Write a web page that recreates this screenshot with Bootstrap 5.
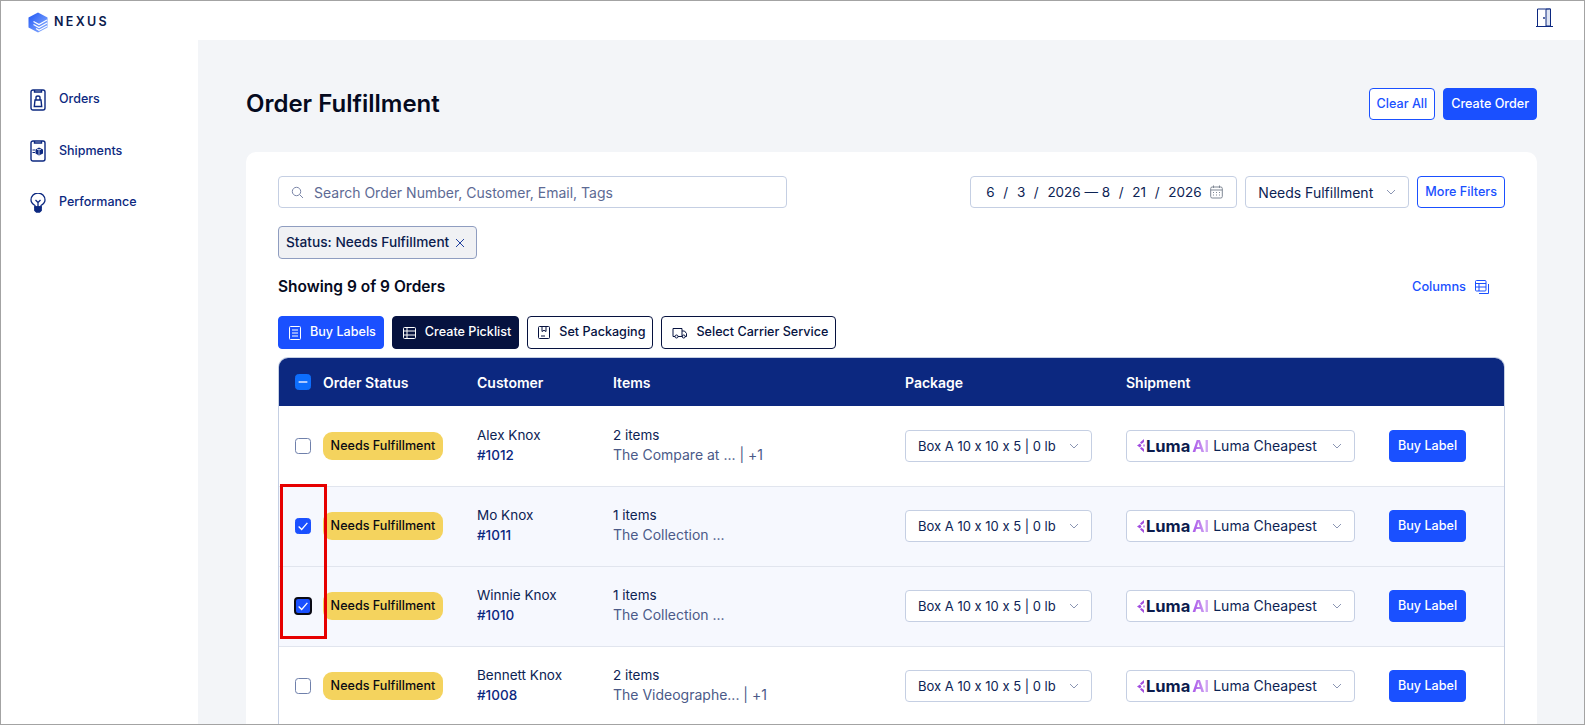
<!DOCTYPE html>
<html lang="en">
<head>
<meta charset="UTF-8">
<meta name="viewport" content="width=device-width, initial-scale=1.0">
<title>Order Fulfillment - Nexus</title>
<link rel="stylesheet" href="https://cdn.jsdelivr.net/npm/bootstrap@5.3.0/dist/css/bootstrap.min.css">
<style>
html, body { height: 725px; overflow: hidden; }
body { font-family: Inter, "Liberation Sans", sans-serif; font-size: 13.5px; color: #0a1f5c; background: #fff; font-feature-settings: "calt" 0; }
.app-frame { height: 725px; border: 1px solid #a3a3a3; overflow: hidden; display: flex; flex-direction: column; }
.top-strip { height: 39px; flex: none; padding: 0 31px 0 27px; }
.brand-row { padding-top: 4px; }
.door-icon { margin-bottom: 7px; }
.brand-name { font-size: 12.5px; font-weight: 600; letter-spacing: 2.3px; color: #0b1b4d; margin-left: 6px; }
.side-nav { width: 197px; flex: none; padding: 34px 0 0 29px; }
.side-link { height: 51.5px; gap: 13px; color: #0c2880; text-decoration: none; font-size: 12.5px; font-weight: 500; }
.main-area { background: #f3f5f8; padding: 48px 47px 0 48px; min-width: 0; }
.page-title { font-size: 24px; font-weight: 600; color: #050a1e; margin: 0; }
.btn-nx { height: 32px; padding: 0 7px; font-size: 12.6px; font-weight: 500; border-radius: 4px; display: inline-flex; align-items: center; white-space: nowrap; }
.btn-line { background: #fff; border: 1px solid #1a50ff; color: #1a50ff; }
.btn-fill { background: #1a50ff; border: 1px solid #1a50ff; color: #fff; }
.btn-navy { background: #06123f; border: 1px solid #06123f; color: #fff; }
.btn-plain { background: #fff; border: 1px solid #06123f; color: #06123f; }
.btn-bulk { height: 33px; gap: 9px; padding: 0 7px 0 10px; }
.work-card { background: #fff; border-radius: 10px; padding: 24px 32px; height: 700px; }
.field-box { height: 32px; border: 1px solid #c5cfe3; border-radius: 4px; background: #fff; color: #0c2354; font-size: 14px; }
.search-box { width: 509px; padding: 0 12px; gap: 10px; }
.search-box input { border: 0; outline: 0; flex: 1; font-size: 14px; color: #0c2354; padding: 0; background: transparent; }
.search-box input::placeholder { color: #5d6a94; opacity: 1; }
.date-box { width: 267px; padding: 0 13px 0 15px; justify-content: space-between; font-size: 13.5px; }
.date-box i { font-style: normal; }
.chev-box { padding: 0 12px; justify-content: space-between; white-space: nowrap; }
.status-box { width: 164px; }
.pack-box { width: 187px; font-size: 13px; }
.ship-box { width: 229px; padding-left: 10px; }
.status-tag { height: 33px; width: 199px; margin-top: 18px; border: 1px solid #8f9dc0; border-radius: 4px; background: #f0f1f4; color: #0b1b4d; font-size: 13.7px; font-weight: 500; padding: 0 7px; gap: 6px; white-space: nowrap; }
.count-row { margin-top: 17px; height: 22px; }
.count-text { font-size: 15.5px; font-weight: 600; color: #050a1e; }
.columns-link { font-size: 12.8px; font-weight: 500; color: #1a50ff; gap: 9px; padding-right: 16px; text-decoration: none; }
.bulk-row { margin-top: 18px; gap: 8px; }
.grid-wrap { margin-top: 8px; position: relative; border: 1px solid #c5cfe3; border-bottom: 0; border-radius: 10px 10px 0 0; overflow: hidden; }
.orders-grid { width: 100%; table-layout: fixed; margin: 0; border-collapse: collapse; }
.orders-grid th { background: #0c2880; color: #fff; height: 48px; font-size: 14px; font-weight: 600; padding: 0; border: 0; vertical-align: middle; }
.orders-grid td { height: 80px; padding: 0; vertical-align: middle; color: #0c2354; border-bottom: 1px solid #e1e5ee; line-height: 20px; }
.orders-grid tr.row-picked td { background: #f6f8fe; }
.orders-grid td.text-cell { padding-bottom: 2px; }
.first-cell { gap: 12px; padding-left: 16px; }
.nx-check { width: 16px; height: 16px; margin: 0; flex: none; border: 1px solid #6f80ab; border-radius: 2px; }
.nx-check:checked { background-color: #1a50ff; border-color: #1a50ff; background-image: url("data:image/svg+xml,%3csvg xmlns='http://www.w3.org/2000/svg' viewBox='0 0 16 16'%3e%3cpath fill='none' stroke='%23fff' stroke-width='1.5' d='M3 8.5 6.5 12 13 4.5'/%3e%3c/svg%3e"); }
.nx-check:indeterminate { background-color: #1a50ff; border-color: #1a50ff; background-image: url("data:image/svg+xml,%3csvg xmlns='http://www.w3.org/2000/svg' viewBox='0 0 16 16'%3e%3cpath stroke='%23dfe7ff' stroke-width='1.5' d='M3 8H13'/%3e%3c/svg%3e"); }
.nx-check.has-focus { outline: 2px solid #0a0a14; outline-offset: -1px; border-radius: 3px; }
.need-pill { width: 120px; height: 28px; background: #f4d35e; border-radius: 9px; color: #0a0a14; font-size: 12.6px; font-weight: 500; white-space: nowrap; }
.order-no { font-weight: 500; color: #0c2880; }
.item-sub { color: #4b5a88; font-size: 14px; }
.luma-mark { font-size: 16.5px; font-weight: 700; color: #0b1b4d; margin-left: 1px; }
.luma-ai { background: linear-gradient(90deg, #a855e8, #d7b3f5); -webkit-background-clip: text; background-clip: text; color: transparent; margin-left: 2px; }
.red-mark { position: absolute; left: 1px; top: 126px; width: 47px; height: 155px; border: 3px solid #e60000; pointer-events: none; }
</style>
</head>
<body>
<div class="app-frame">

  <!-- Top bar -->
  <div class="top-strip d-flex align-items-center justify-content-between">
    <div class="brand-row d-flex align-items-center">
      <svg width="20" height="21" viewBox="0 0 20 21">
        <defs><linearGradient id="hexFill" x1="0" y1="0" x2="1" y2="1"><stop offset="0" stop-color="#1f56f5"/><stop offset="1" stop-color="#8fb2ff"/></linearGradient></defs>
        <path d="M10 0.5 19.5 5.5V15.5L10 20.5 0.5 15.5V5.5Z" fill="url(#hexFill)"/>
        <path d="M5.5 9.5 11 12.5 19 8M5.5 12.5 11 15.5 19 11M8 16.5 11 18.2 19 14" fill="none" stroke="#fff" stroke-width="1.2"/>
      </svg>
      <span class="brand-name">NEXUS</span>
    </div>
    <svg class="door-icon" width="17" height="19" viewBox="0 0 17 19" fill="none" stroke="#0c2880" stroke-width="1">
      <path d="M0 18.5H17M1.5 18V1H14.5V18"/>
      <path d="M10 1.2V18H14.5V1Z" fill="#dfe5f3"/>
      <circle cx="8" cy="10" r=".9" fill="#0c2880" stroke="none"/>
    </svg>
  </div>

  <div class="d-flex flex-grow-1 overflow-hidden">
    <!-- Sidebar -->
    <nav class="side-nav d-flex flex-column">
      <a href="#" class="side-link d-flex align-items-center">
        <svg width="16" height="22" viewBox="0 0 16 22" fill="none" stroke="#0c2880" stroke-width="1.4">
          <rect x="1" y="1" width="14" height="20" rx="2"/><path d="M4.5 1V3H11.5V1"/>
          <path d="M5 11H11L11.7 17.5H4.3Z"/><path d="M6 11V8.5C6 6.5 10 6.5 10 8.5V11"/>
        </svg>
        Orders
      </a>
      <a href="#" class="side-link d-flex align-items-center">
        <svg width="16" height="22" viewBox="0 0 16 22" fill="none" stroke="#0c2880" stroke-width="1.4">
          <rect x="1" y="1" width="14" height="20" rx="2"/><path d="M4.5 1V3H11.5V1"/>
          <path d="M9 7.5 13 9.5V13.5L9 15.5 5.5 13.5V9.5Z" fill="#0c2880" stroke="none"/><path d="M7 9.5H11M9 10V15" stroke="#dfe5f3" stroke-width=".8"/><path d="M2.5 10H5M2.5 12.5H5" stroke-width="1"/>
        </svg>
        Shipments
      </a>
      <a href="#" class="side-link d-flex align-items-center">
        <svg width="16" height="20" viewBox="0 0 16 20" fill="none" stroke="#0c2880" stroke-width="1.3">
          <path d="M5 14V12.5C2.5 11 1 9.5 1 7A7 7 0 0 1 15 7C15 9.5 13.5 11 11 12.5V14Z"/>
          <path d="M5.5 7 8 9.5 10.5 7M8 9.5V14"/>
          <path d="M4.8 14H11.2V17.5L9.5 19H6.5L4.8 17.5Z" fill="#0c2880"/>
        </svg>
        Performance
      </a>
    </nav>

    <!-- Main -->
    <main class="main-area flex-grow-1">
      <div class="d-flex justify-content-between align-items-center mb-4 pb-2">
        <h1 class="page-title">Order Fulfillment</h1>
        <div class="d-flex gap-2">
          <button class="btn-nx btn-line">Clear All</button>
          <button class="btn-nx btn-fill">Create Order</button>
        </div>
      </div>

      <div class="work-card">
        <div class="d-flex justify-content-between">
          <label class="field-box search-box d-flex align-items-center">
            <svg width="13" height="13" viewBox="0 0 13 13" fill="none" stroke="#7b86a8" stroke-width="1"><circle cx="5.5" cy="5.5" r="4.2"/><path d="M8.5 8.5 12 12"/></svg>
            <input type="text" placeholder="Search Order Number, Customer, Email, Tags">
          </label>
          <div class="d-flex gap-2">
            <div class="field-box date-box d-flex align-items-center">
              <span>6</span><i>/</i><span>3</span><i>/</i><span>2026 — 8</span><i>/</i><span>21</span><i>/</i><span>2026</span>
              <svg width="13" height="14" viewBox="0 0 13 14" fill="none" stroke="#7f8794" stroke-width="1"><rect x=".7" y="2" width="11.6" height="11" rx="1.5"/><path d="M.7 5H12.3M3.5 .5V3M9.5 .5V3M3 7.5H4M6 7.5H7M9 7.5H10M3 10H4M6 10H7M9 10H10"/></svg>
            </div>
            <div class="field-box chev-box status-box d-flex align-items-center">
              Needs Fulfillment
              <svg width="10" height="6" viewBox="0 0 10 6" fill="none" stroke="#8a95b3" stroke-width="1"><path d="M1 1 5 5 9 1"/></svg>
            </div>
            <button class="btn-nx btn-line">More Filters</button>
          </div>
        </div>

        <div class="status-tag d-inline-flex align-items-center">
          Status: Needs Fulfillment
          <svg width="10" height="10" viewBox="0 0 10 10" fill="none" stroke="#1f3f9e" stroke-width="1"><path d="M1 1 9 9M9 1 1 9"/></svg>
        </div>

        <div class="count-row d-flex justify-content-between align-items-center">
          <span class="count-text">Showing 9 of 9 Orders</span>
          <a href="#" class="columns-link d-flex align-items-center">Columns
            <svg width="14" height="14" viewBox="0 0 14 14" fill="none" stroke="#1a50ff" stroke-width="1"><rect x=".5" y=".5" width="10.5" height="10.5" rx="1"/><path d="M.5 3.5H11M.5 7H11M4 3.5V11"/><path d="M13.5 4V13.5H4"/></svg>
          </a>
        </div>

        <div class="bulk-row d-flex">
          <button class="btn-nx btn-fill btn-bulk">
            <svg width="12" height="14" viewBox="0 0 12 14" fill="none" stroke="#fff" stroke-width="1"><rect x=".5" y=".5" width="11" height="13" rx="1"/><path d="M3 4H9M3 7H9M3 10H9"/></svg>
            Buy Labels</button>
          <button class="btn-nx btn-navy btn-bulk">
            <svg width="13" height="12" viewBox="0 0 13 12" fill="none" stroke="#fff" stroke-width="1"><rect x=".5" y=".5" width="12" height="11" rx="1"/><path d="M.5 4H12.5M.5 8H12.5M4 .5V11.5"/></svg>
            Create Picklist</button>
          <button class="btn-nx btn-plain btn-bulk">
            <svg width="12" height="13" viewBox="0 0 12 13" fill="none" stroke="#06123f" stroke-width="1"><rect x=".5" y=".5" width="11" height="12" rx="1"/><path d="M4 .5V5.5L6 4.3 8 5.5V.5M3 10H7"/></svg>
            Set Packaging</button>
          <button class="btn-nx btn-plain btn-bulk">
            <svg width="15" height="12" viewBox="0 0 15 12" fill="none" stroke="#06123f" stroke-width="1"><path d="M3 9.5H1V1.5H10V9.5H6M10 4H12.5L14.5 6.5V9.5H13M10 9.5H10.5"/><circle cx="4.5" cy="9.5" r="1.5"/><circle cx="11.7" cy="9.5" r="1.5"/></svg>
            Select Carrier Service</button>
        </div>

        <div class="grid-wrap">
          <table class="table orders-grid">
            <colgroup><col style="width:198px"><col style="width:136px"><col style="width:292px"><col style="width:221px"><col style="width:263px"><col></colgroup>
            <thead>
              <tr>
                <th><div class="first-cell d-flex align-items-center"><input class="form-check-input nx-check" type="checkbox" id="checkAll"><span>Order Status</span></div></th>
                <th>Customer</th><th>Items</th><th>Package</th><th>Shipment</th><th></th>
              </tr>
            </thead>
            <tbody id="orderRows"></tbody>
          </table>
          <div class="red-mark"></div>
        </div>
      </div>
    </main>
  </div>
</div>

<script>
const orders = [
  { name: "Alex Knox", no: "#1012", items: "2 items", sub: "The Compare at ...", more: " | +1" },
  { name: "Mo Knox", no: "#1011", items: "1 items", sub: "The Collection ...", picked: true },
  { name: "Winnie Knox", no: "#1010", items: "1 items", sub: "The Collection ...", picked: true, focus: true },
  { name: "Bennett Knox", no: "#1008", items: "2 items", sub: "The Videographe...", more: " | +1" }
];
const chev = '<svg width="10" height="6" viewBox="0 0 10 6" fill="none" stroke="#8a95b3" stroke-width="1"><path d="M1 1 5 5 9 1"/></svg>';
const lumaIcon = '<svg width="8" height="13" viewBox="0 0 8 13" fill="#a24de0"><path d="M7 0 3 3.5 4.5 5 7 3ZM0 6.5 3 4.5 4.5 6.5 3 8.5ZM7 13 3 9.5 4.5 8 7 10Z"/><path d="M6 5.5H8V7.5H6Z" opacity=".6"/></svg>';
let rows = "";
orders.forEach(o => {
  rows += `<tr class="${o.picked ? "row-picked" : ""}">
    <td><div class="first-cell d-flex align-items-center">
      <input class="form-check-input nx-check ${o.focus ? "has-focus" : ""}" type="checkbox" ${o.picked ? "checked" : ""}>
      <span class="need-pill d-flex align-items-center justify-content-center">Needs Fulfillment</span></div></td>
    <td class="text-cell"><div>${o.name}</div><div class="order-no">${o.no}</div></td>
    <td class="text-cell"><div>${o.items}</div><div class="item-sub">${o.sub}${o.more || ""}</div></td>
    <td><div class="field-box chev-box pack-box d-flex align-items-center">Box A 10 x 10 x 5 | 0 lb ${chev}</div></td>
    <td><div class="field-box chev-box ship-box d-flex align-items-center">
      <span class="d-flex align-items-center">${lumaIcon}<span class="luma-mark">Luma<span class="luma-ai">AI</span></span><span class="ms-1">Luma Cheapest</span></span>${chev}</div></td>
    <td><button class="btn-nx btn-fill px-2">Buy Label</button></td>
  </tr>`;
});
document.getElementById("orderRows").innerHTML = rows;
document.getElementById("checkAll").indeterminate = true;
</script>
<script src="https://cdn.jsdelivr.net/npm/bootstrap@5.3.0/dist/js/bootstrap.bundle.min.js"></script>
</body>
</html>
